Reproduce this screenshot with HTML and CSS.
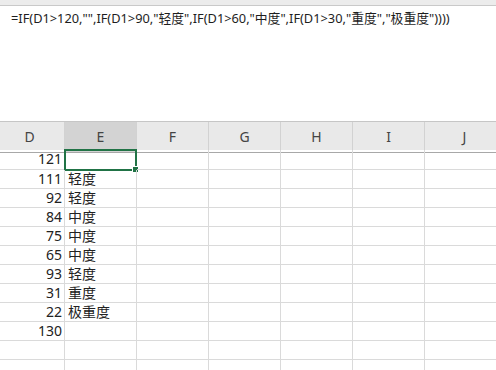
FILE: index.html
```html
<!DOCTYPE html>
<html lang="zh-CN">
<head>
  <meta charset="UTF-8" />
  <title>Excel</title>
  <link rel="stylesheet" href="styles.css">
</head>
<body>
  <div class="topbar"></div>
  <div class="formula">=IF(D1&gt;120,"",IF(D1&gt;90,"轻度",IF(D1&gt;60,"中度",IF(D1&gt;30,"重度","极重度"))))</div>

  <div class="sheet">
    <div class="row head">
      <div class="cell">D</div>
      <div class="cell sel">E</div>
      <div class="cell">F</div>
      <div class="cell">G</div>
      <div class="cell">H</div>
      <div class="cell">I</div>
      <div class="cell">J</div>
    </div>
    <div class="row first">
      <div class="cell num">121</div>
      <div class="cell active"><span class="handle"></span></div>
      <div class="cell"></div><div class="cell"></div><div class="cell"></div><div class="cell"></div><div class="cell"></div>
    </div>
    <div class="row"><div class="cell num">111</div><div class="cell txt">轻度</div><div class="cell"></div><div class="cell"></div><div class="cell"></div><div class="cell"></div><div class="cell"></div></div>
    <div class="row"><div class="cell num">92</div><div class="cell txt">轻度</div><div class="cell"></div><div class="cell"></div><div class="cell"></div><div class="cell"></div><div class="cell"></div></div>
    <div class="row"><div class="cell num">84</div><div class="cell txt">中度</div><div class="cell"></div><div class="cell"></div><div class="cell"></div><div class="cell"></div><div class="cell"></div></div>
    <div class="row"><div class="cell num">75</div><div class="cell txt">中度</div><div class="cell"></div><div class="cell"></div><div class="cell"></div><div class="cell"></div><div class="cell"></div></div>
    <div class="row"><div class="cell num">65</div><div class="cell txt">中度</div><div class="cell"></div><div class="cell"></div><div class="cell"></div><div class="cell"></div><div class="cell"></div></div>
    <div class="row"><div class="cell num">93</div><div class="cell txt">轻度</div><div class="cell"></div><div class="cell"></div><div class="cell"></div><div class="cell"></div><div class="cell"></div></div>
    <div class="row"><div class="cell num">31</div><div class="cell txt">重度</div><div class="cell"></div><div class="cell"></div><div class="cell"></div><div class="cell"></div><div class="cell"></div></div>
    <div class="row"><div class="cell num">22</div><div class="cell txt">极重度</div><div class="cell"></div><div class="cell"></div><div class="cell"></div><div class="cell"></div><div class="cell"></div></div>
    <div class="row"><div class="cell num">130</div><div class="cell"></div><div class="cell"></div><div class="cell"></div><div class="cell"></div><div class="cell"></div><div class="cell"></div></div>
    <div class="row"><div class="cell"></div><div class="cell"></div><div class="cell"></div><div class="cell"></div><div class="cell"></div><div class="cell"></div><div class="cell"></div></div>
    <div class="row"><div class="cell"></div><div class="cell"></div><div class="cell"></div><div class="cell"></div><div class="cell"></div><div class="cell"></div><div class="cell"></div></div>
  </div>
</body>
</html>
```

FILE: styles.css
```css
html, body {
  margin: 0;
  padding: 0;
  background: #fff;
  overflow: hidden;
  height: 370px;
}
body {
  font-family: "Noto Sans", "Noto Sans CJK SC", sans-serif;
  color: #222;
}
.topbar {
  height: 5px;
  background: #ececec;
  border-bottom: 1px solid #c9c9c9;
}
.formula {
  height: 115px;
  padding: 3px 0 0 11px;
  box-sizing: border-box;
  font-size: 12.8px;
  line-height: 18px;
  color: #1e1e1e;
  white-space: nowrap;
}
.sheet {
  border-top: 1px solid #c6c6c6;
  margin-left: -5px;
}
.row {
  display: grid;
  grid-template-columns: 70px 72px 72px 72px 72px 72px 80px;
  height: 19px;
}
.row .cell {
  border-right: 1px solid #dadada;
  border-bottom: 1px solid #dadada;
  box-sizing: border-box;
  font-size: 14px;
  line-height: 18px;
  white-space: nowrap;
  position: relative;
}
.row.first {
  height: 20px;
}
.head {
  height: 28px;
  background: #e9e9e9;
}
.head .cell {
  border-bottom: 1px solid #a8a8a8;
  border-right: 1px solid #d2d2d2;
  text-align: center;
  line-height: 30px;
  color: #444;
  font-size: 14px;
}
.head .cell.sel {
  background: #d3d3d3;
}
.num {
  text-align: right;
  padding-right: 2px;
}
.txt {
  padding-left: 3px;
}
.cell.active {
  border: 2px solid #217346;
  margin: -1px 0 -1px -1px;
}
.handle {
  position: absolute;
  right: -4px;
  bottom: -4px;
  width: 5px;
  height: 5px;
  background: #217346;
  border: 1px solid #fff;
}
```
